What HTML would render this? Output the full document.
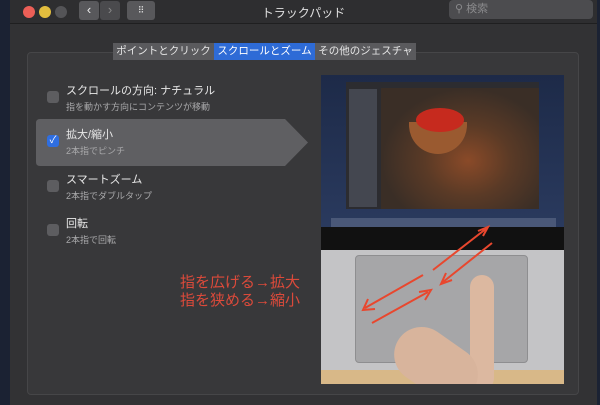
<!DOCTYPE html>
<html><head><meta charset="utf-8"><style>
*{margin:0;padding:0;box-sizing:border-box}
body{width:600px;height:405px;overflow:hidden;background:#1b2233;font-family:"Liberation Sans","Noto Sans CJK JP",sans-serif;position:relative}
.win{position:absolute;left:10px;top:0;width:587px;height:405px;background:#323234}
.title{position:absolute;left:0;top:0;width:587px;height:24px;background:#2e2e30;border-bottom:1px solid #1f1f20}
.dot{position:absolute;top:6px;width:12px;height:12px;border-radius:50%}
.btn{position:absolute;top:1px;height:19px;background:#58585b;border-radius:3px}
.panel{position:absolute;left:17px;top:52px;width:552px;height:343px;background:#38383a;border:1px solid #464648;border-radius:4px}
.tabs{position:absolute;top:43px;left:103px;height:17px;display:flex;font-size:10.5px;color:#e6e6e6}
.tabs div{background:#5a5a5d;width:101px;text-align:center;line-height:17px;white-space:nowrap}
.tabs .on{background:#2e6bd6;color:#fff}
.item{position:absolute;left:28px;font-size:11px;color:#e8e8e8}
.item small{display:block;font-size:9px;color:#a9a9ab;margin-top:2px}
.cb{position:absolute;left:-19px;top:8px;width:12px;height:12px;border-radius:3px;background:#5d5d60}
.red{position:absolute;left:180px;top:274px;font-size:15px;line-height:18px;color:#dc4a3a}
</style></head><body>
<div class="win">
<div class="title">
<div class="dot" style="left:13px;background:#ec5f57"></div>
<div class="dot" style="left:29px;background:#e2bd3e"></div>
<div class="dot" style="left:45px;background:#545457"></div>
<div class="btn" style="left:69px;width:20px;color:#eee;font-size:13px;text-align:center;line-height:18px">‹</div>
<div class="btn" style="left:90px;width:20px;color:#888;font-size:13px;text-align:center;line-height:18px;background:#4a4a4d">›</div>
<div class="btn" style="left:117px;width:28px;color:#ddd;font-size:9px;text-align:center;line-height:18px">⠿</div>
<div style="position:absolute;left:0;width:587px;top:4px;text-align:center;font-size:12px;color:#e0e0e0">トラックパッド</div>
<div style="position:absolute;left:439px;top:0;width:144px;height:19px;background:#4c4c4f;border-radius:4px;color:#8a8a8c;font-size:11px;line-height:19px;padding-left:6px">⚲ 検索</div>
</div>
<div class="panel"></div>
<div class="tabs"><div>ポイントとクリック</div><div class="on">スクロールとズーム</div><div>その他のジェスチャ</div></div>
<svg style="position:absolute;left:26px;top:119px" width="272" height="47"><path d="M4 0H249L272 23.5L249 47H4Q0 47 0 43V4Q0 0 4 0Z" fill="#5f5f62"/></svg>
</div>
<div class="item" style="left:66px;top:82px"><div class="cb" style="top:9px"></div>スクロールの方向: ナチュラル<small>指を動かす方向にコンテンツが移動</small></div>
<div class="item" style="left:66px;top:126px"><div class="cb" style="top:9px;background:#2f6ee0;color:#fff;font-size:10px;text-align:center;line-height:12px">✓</div>拡大/縮小<small>2本指でピンチ</small></div>
<div class="item" style="left:66px;top:171px"><div class="cb" style="top:9px"></div>スマートズーム<small>2本指でダブルタップ</small></div>
<div class="item" style="left:66px;top:215px"><div class="cb" style="top:9px"></div>回転<small>2本指で回転</small></div>
<div class="red">指を広げる→拡大<br>指を狭める→縮小</div>
<div style="position:absolute;left:321px;top:75px;width:243px;height:309px;overflow:hidden;background:#c4c4c6">
<div style="position:absolute;left:0;top:0;width:243px;height:152px;background:linear-gradient(#1d2a48,#2a3a5e)"></div>
<div style="position:absolute;left:25px;top:7px;width:193px;height:127px;background:#2c2c30"></div>
<div style="position:absolute;left:60px;top:13px;width:158px;height:121px;background:radial-gradient(ellipse at 55% 60%,#8a4a28 0,#5a3a26 35%,#3a2e26 70%)"></div>
<div style="position:absolute;left:88px;top:47px;width:58px;height:32px;border-radius:0 0 30px 30px;background:#9a5a30"></div>
<div style="position:absolute;left:95px;top:33px;width:48px;height:24px;border-radius:50%;background:#c62a1e"></div>
<div style="position:absolute;left:28px;top:14px;width:28px;height:118px;background:#555a66;opacity:.6"></div>
<div style="position:absolute;left:10px;top:143px;width:225px;height:10px;background:#4a5878"></div>
<div style="position:absolute;left:0;top:152px;width:243px;height:23px;background:#111"></div>
<div style="position:absolute;left:34px;top:180px;width:173px;height:108px;background:#a6a6a8;border-radius:4px;border:1px solid #8e8e90"></div>
<div style="position:absolute;left:0;top:295px;width:243px;height:14px;background:#d8b888"></div>
<div style="position:absolute;left:149px;top:200px;width:24px;height:115px;border-radius:12px;background:#dcb8a0"></div>
<div style="position:absolute;left:70px;top:262px;width:90px;height:55px;border-radius:28px;background:#d8b49c;transform:rotate(35deg)"></div>
<svg style="position:absolute;left:0;top:0" width="243" height="309"><g stroke="#e8472e" stroke-width="2" fill="none"><path d="M112 195L166 153M157 156L167 152L162 161"/><path d="M171 168L122 207M125 198L120 209L131 205"/><path d="M102 200L44 233M47 224L42 235L54 234"/><path d="M51 248L107 217M98 217L110 215L104 225"/></g></svg>
</div>
</body></html>
